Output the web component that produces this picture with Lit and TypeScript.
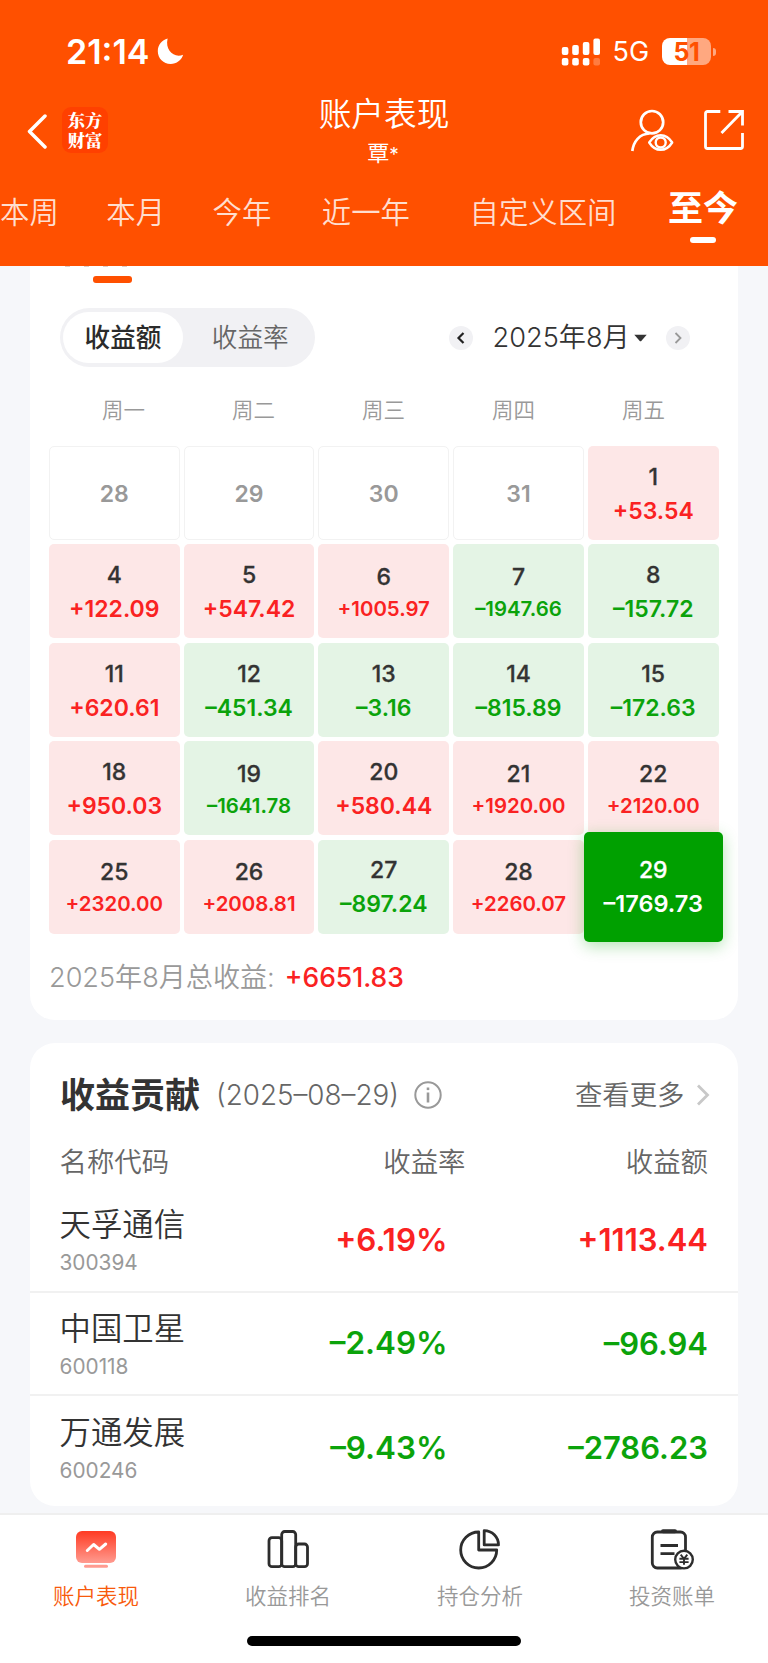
import { LitElement, html, css, svg } from "lit";
import { customElement, state } from "lit/decorators.js";
import { classMap } from "lit/directives/class-map.js";

interface Day {
  d: number;
  v?: string;
  selected?: boolean;
}

const DAYS: Day[] = [
  { d: 28 }, { d: 29 }, { d: 30 }, { d: 31 }, { d: 1, v: "+53.54" },
  { d: 4, v: "+122.09" }, { d: 5, v: "+547.42" }, { d: 6, v: "+1005.97" }, { d: 7, v: "–1947.66" }, { d: 8, v: "–157.72" },
  { d: 11, v: "+620.61" }, { d: 12, v: "–451.34" }, { d: 13, v: "–3.16" }, { d: 14, v: "–815.89" }, { d: 15, v: "–172.63" },
  { d: 18, v: "+950.03" }, { d: 19, v: "–1641.78" }, { d: 20, v: "+580.44" }, { d: 21, v: "+1920.00" }, { d: 22, v: "+2120.00" },
  { d: 25, v: "+2320.00" }, { d: 26, v: "+2008.81" }, { d: 27, v: "–897.24" }, { d: 28, v: "+2260.07" }, { d: 29, v: "–1769.73", selected: true },
];

const STOCKS = [
  { name: "天孚通信", code: "300394", rate: "+6.19%", amount: "+1113.44" },
  { name: "中国卫星", code: "600118", rate: "–2.49%", amount: "–96.94" },
  { name: "万通发展", code: "600246", rate: "–9.43%", amount: "–2786.23" },
];

const signalIcon = svg`<svg width="40" height="28" viewBox="0 0 40 28" fill="#fff">
  <rect x="0.8" y="9" width="6.6" height="8" rx="2"/><rect x="11.2" y="7" width="6.6" height="10" rx="2"/>
  <rect x="21.8" y="4" width="6.6" height="13" rx="2"/><rect x="32.4" y="0.5" width="6.6" height="16.5" rx="2"/>
  <rect x="0.8" y="20" width="6.6" height="7.5" rx="2"/><rect x="11.2" y="20" width="6.6" height="7.5" rx="2"/>
  <rect x="21.8" y="20" width="6.6" height="7.5" rx="2"/><rect x="32.4" y="20" width="6.6" height="7.5" rx="2" opacity=".25"/>
</svg>`;

const moonIcon = svg`<svg width="27" height="27" viewBox="0 0 27 27"><path d="M10.600.6C5 2 .8 7 .8 13.200.8 20.300 6.500 26 13.600 26c6 0 11-4 12.500-9.200-8.800 3.600-18.300-4-15.500-16.200Z" fill="#fff"/></svg>`;

const userIcon = svg`<svg width="44" height="44" viewBox="0 0 44 44" fill="none" stroke="#fff" stroke-width="2.700">
  <circle cx="22" cy="13.200" r="11.200"/>
  <path d="M2.300 42C3.500 32.500 9.500 24.800 19.500 24.500"/>
  <path d="M19.200 33.500c3-4.800 7-7.300 11.500-7.300s8.500 2.500 11.500 7.300c-3 4.800-7 7.300-11.500 7.300s-8.500-2.500-11.500-7.300Z" stroke-width="2.400" stroke-linejoin="round"/>
  <circle cx="30.700" cy="33.500" r="5" stroke-width="2.400"/>
</svg>`;

const shareIcon = svg`<svg width="42" height="42" viewBox="0 0 42 42" fill="none" stroke="#fff" stroke-width="2.800">
  <path d="M17.300 2.500H4.500a2 2 0 0 0-2 2v33a2 2 0 0 0 2 2h33a2 2 0 0 0 2-2V24"/>
  <path d="M25.500 2.500h14v14M18.500 24 39 3"/>
</svg>`;

const tabIcons = [
  svg`<svg width="44" height="44" viewBox="0 0 44 44"><defs><linearGradient id="g" x1="0" y1="0" x2="0" y2="1"><stop offset="0" stop-color="#ff3a22"/><stop offset="1" stop-color="#ff9b90"/></linearGradient></defs>
    <rect x="2" y="4" width="40" height="32" rx="6" fill="url(#g)"/><rect x="10" y="37.700" width="24" height="3" rx="1.500" fill="#ff9b90"/>
    <path d="m13.300 23.500 6.300-6 5.800 4.800 6.300-5.300" fill="none" stroke="#fff" stroke-width="3" stroke-linecap="round" stroke-linejoin="round"/></svg>`,
  svg`<svg width="44" height="44" viewBox="0 0 44 44" fill="none" stroke="#2d2d2d" stroke-width="2.800">
    <rect x="3" y="10.700" width="12.700" height="29" rx="3"/><rect x="15.700" y="4.500" width="14" height="35.200" rx="3"/><rect x="29.700" y="17" width="11.800" height="22.700" rx="3"/></svg>`,
  svg`<svg width="44" height="44" viewBox="0 0 44 44" fill="none" stroke="#2d2d2d" stroke-width="2.800" stroke-linejoin="round">
    <path d="M20.700 5a18 18 0 1 0 18 18h-18Z"/><path d="M26.200 3.600v14.300h14.300A14.300 14.300 0 0 0 26.200 3.600Z"/></svg>`,
  svg`<svg width="44" height="44" viewBox="0 0 44 44" fill="none" stroke="#2d2d2d" stroke-width="2.800">
    <rect x="2.300" y="5" width="33.200" height="36" rx="5"/><path d="M13 4.300h12" stroke-width="4" stroke-linecap="round"/>
    <path d="M10.500 18.500H28M10.500 26.700h14"/><circle cx="34" cy="32.600" r="8.800" fill="#fff" stroke-width="2.400"/>
    <path d="m30.700 27.600 3.300 4.200 3.300-4.200M34 31.800v6M29.400 31.800h9.200M29.400 35.100h9.200" stroke-width="1.900"/></svg>`,
];

@customElement("app-root")
export class AppRoot extends LitElement {
  @state() private mode = 0;

  static styles = css`
    :host { display: flex; flex-direction: column; width: 768px; height: 1663px; overflow: hidden; background: #f6f7fa; font-family: Inter, "Noto Sans CJK SC", sans-serif; color: #333; white-space: nowrap; }
    * { box-sizing: border-box; }
    svg { display: block; flex: none; }
    header { height: 266px; flex: none; background: #ff5000; color: #fff; overflow: hidden; }
    .status { display: flex; align-items: center; height: 103px; padding: 0 52px 0 66px; }
    .clock { width: 91px; font-size: 34px; font-weight: 600; line-height: 40px; }
    .status .signal { margin-left: auto; }
    .net { margin-left: 11.500px; width: 49.500px; font-size: 27px; line-height: 30px; }
    .battery { width: 49px; height: 27px; border-radius: 8px; background: linear-gradient(90deg, #fff 51%, #ffa880 51%); color: #ff5000; font-size: 25px; font-weight: 700; line-height: 28px; text-align: center; letter-spacing: -.5px; }
    .nub { width: 3px; height: 8px; margin-left: 2px; border-radius: 0 4px 4px 0; background: #ffa880; }
    .nav { display: grid; grid-template-columns: 1fr auto 1fr; height: 75px; }
    .left { display: flex; align-items: flex-start; padding: 4px 0 0 27px; gap: 15px; }
    .left svg { margin-top: 5.500px; }
    .logo { display: flex; flex-direction: column; align-items: center; width: 46px; height: 46px; border-radius: 9px; background: #ff4000; padding-top: 3px; font-family: "Noto Serif CJK SC", "Noto Sans CJK SC", sans-serif; font-size: 17.300px; line-height: 20px; font-weight: 900; }
    .mid { text-align: center; }
    .mid h1 { margin: -7px 0 0; font-size: 32.700px; line-height: 36px; font-weight: 350; }
    .mid p { margin: 3px 2px 0 0; font-size: 22px; line-height: 36px; }
    .mid small { font-size: 19px; }
    .right { display: flex; justify-content: flex-end; padding: 5.500px 23px 0 0; gap: 29px; }
    .ranges { display: flex; height: 88px; font-size: 29.400px; font-weight: 350; color: rgba(255,255,255,.82); line-height: 40px; padding-top: 15px; }
    .ranges span { margin-right: 47.500px; }
    .ranges .third { margin-right: 50.500px; }
    .ranges .wide { margin-right: 59.500px; }
    .ranges .last { margin-right: 51.500px; }
    .ranges .on { display: flex; flex-direction: column; align-items: center; margin: -6px 0 0; font-size: 35px; font-weight: 700; color: #fff; line-height: 42px; }
    .on i { width: 26px; height: 6px; border-radius: 3px; background: #fff; margin-top: 8px; }
    main { flex: none; height: 1247px; padding: 0 30px; overflow: hidden; }
    .card { background: #fff; }
    .cal { height: 754px; border-radius: 0 0 25px 25px; padding: 0 19.500px 0 19px; }
    .bits { display: flex; gap: 14px; height: 10px; padding-left: 16px; }
    .bits i { width: 5px; height: 1px; background: #d9cfcb; }
    .mark { width: 39px; height: 6.500px; margin-left: 44px; border-radius: 3px; background: #ff5000; }
    .tools { display: flex; align-items: center; margin-top: 25px; height: 60px; padding-left: 10.500px; }
    .pill { display: flex; width: 255.500px; height: 59px; padding: 4px 3.500px; border-radius: 30px; background: #f1f1f4; font-size: 25.600px; line-height: 52px; color: #666; text-align: center; font-weight: 350; }
    .pill span { flex: 1; border-radius: 26px; padding-left: 6px; }
    .pill .sel { flex: none; width: 120px; padding: 0; background: #fff; color: #2b2b2b; font-weight: 500; }
    .month { display: flex; align-items: center; margin-left: 134px; }
    .rd { width: 24px; height: 24px; border-radius: 50%; background: #f1f1f4; display: flex; align-items: center; justify-content: center; }
    .month b { width: 134.500px; margin-left: 19.500px; margin-right: 6.500px; font-size: 27.200px; font-weight: 350; line-height: 36px; }
    .month .tri { margin-right: 19px; }
    .week { display: grid; grid-template-columns: repeat(5, 130px); margin: 24px 0 0 9.500px; font-size: 21.500px; line-height: 36px; color: #999; text-align: center; font-weight: 350; }
    .grid { display: grid; grid-template-columns: repeat(5, 1fr); grid-auto-rows: 94px; gap: 4.400px 4.200px; margin-top: 18.500px; }
    .cell { border-radius: 5px; display: flex; flex-direction: column; align-items: center; justify-content: center; font-size: 23px; font-weight: 600; line-height: 34px; padding-top: 1.500px; }
    .cell .n { font-size: 23px; font-weight: 500; -webkit-text-stroke: .3px; }
    .none { border: 1px solid #f2f2f2; color: #999; }
    .none .n { font-weight: 600; -webkit-text-stroke: 0; }
    .up { background: #fde7e7; } .up .v { color: #fa2222; }
    .down { background: #e4f4e5; } .down .v { color: #0ba30b; }
    .small .v { font-size: 20.400px; line-height: 30px; }
    .small { padding-top: 1.500px; }
    .selected { margin: -8px -4px; background: #00a000; color: #fff; box-shadow: 0 4px 16px rgba(0,160,0,.3); z-index: 1; }
    .selected .v { color: #fff; font-size: 23.500px; }
    .total { display: flex; margin-top: 26px; font-size: 27.100px; line-height: 36px; color: #999; font-weight: 350; }
    .total b { margin-left: 10px; color: #fa2222; font-weight: 500; font-size: 26.500px; line-height: 35px; }
    .contrib { margin-top: 23px; height: 463px; border-radius: 25px; }
    .head { display: flex; align-items: center; height: 104px; padding: 0 28px 0 30px; }
    .head h2 { margin: 0; width: 156px; font-size: 35px; font-weight: 700; line-height: 44px; }
    .head .date { width: 198px; font-size: 27.800px; color: #666; font-weight: 350; }
    .head .more { margin: -5px 11.500px 0 auto; font-size: 27.400px; color: #666; font-weight: 350; }
    .cols, .row { display: grid; grid-template-columns: 1fr 200px 260.500px; padding: 0 30px 0 29.500px; }
    .cols { height: 42px; font-size: 27.400px; line-height: 31px; color: #666; text-align: right; font-weight: 350; }
    .cols span:first-child { text-align: left; }
    .cols .rate { margin-right: -18px; }
    .row { height: 103.500px; align-items: center; border-bottom: 2px solid #f1f1f1; }
    .row:last-child { border: 0; }
    .row .name { font-size: 31.400px; line-height: 40px; font-weight: 350; padding-top: 4px; height: 44px; }
    .row .code { font-size: 20.800px; line-height: 30px; color: #999; margin-top: 3px; }
    .row .num { font-size: 31px; font-weight: 600; text-align: right; }
    .row .rate { font-size: 31.400px; }
    .num.up, .num.down { background: none; }
    .num.up { color: #fa2222; } .num.down { color: #0ba30b; }
    nav { flex: 1; background: #fff; border-top: 2px solid #efefef; display: flex; flex-direction: column; align-items: center; }
    .tabs { display: grid; grid-template-columns: repeat(4, 1fr); width: 100%; padding-top: 12px; height: 121px; }
    .tab { display: flex; flex-direction: column; align-items: center; font-size: 21.500px; line-height: 30px; color: #999; gap: 10px; font-weight: 350; }
    .tab.act { color: #f85a0c; }
    .home { width: 274px; height: 10px; border-radius: 5px; background: #000; }
  `;

  private cell(c: Day) {
    const up = c.v?.startsWith("+") ?? false;
    const cls = {
      cell: true, none: !c.v, up, down: !!c.v && !up,
      small: !!c.v && c.v.length > 7 && !c.selected, selected: !!c.selected,
    };
    return html`<div class=${classMap(cls)}><span class="n">${c.d}</span>${c.v ? html`<span class="v">${c.v}</span>` : ""}</div>`;
  }

  render() {
    return html`
      <header>
        <div class="status">
          <span class="clock">21:14</span>${moonIcon}
          <span class="signal">${signalIcon}</span>
          <span class="net">5G</span>
          <span class="battery">51</span><span class="nub"></span>
        </div>
        <div class="nav">
          <div class="left">
            <svg width="20" height="36" viewBox="0 0 20 36"><path d="M18 3 2.500 18.500 18 34" fill="none" stroke="#fff" stroke-width="3.500" stroke-linejoin="round" stroke-linecap="round"/></svg>
            <div class="logo"><span>东方</span><span>财富</span></div>
          </div>
          <div class="mid"><h1>账户表现</h1><p>覃<small>*</small></p></div>
          <div class="right">${userIcon}${shareIcon}</div>
        </div>
        <div class="ranges">
          <span>本周</span><span>本月</span><span class="third">今年</span><span class="wide">近一年</span><span class="last">自定义区间</span>
          <div class="on">至今<i></i></div>
        </div>
      </header>
      <main>
        <section class="card cal">
          <div class="bits"><i></i><i></i><i></i><i></i></div>
          <div class="mark"></div>
          <div class="tools">
            <div class="pill">
              ${["收益额", "收益率"].map((t, i) => html`<span class=${classMap({ sel: this.mode === i })} @click=${() => (this.mode = i)}>${t}</span>`)}
            </div>
            <div class="month">
              <span class="rd"><svg width="10" height="12" viewBox="0 0 10 12"><path d="M7.500 1 2.500 6l5 5" fill="none" stroke="#222" stroke-width="2.200"/></svg></span>
              <b>2025年8月</b>
              <svg class="tri" width="13" height="8" viewBox="0 0 13 8"><path d="M.3.800h12.400L7.500 6.700q-1 1-2 0Z" fill="#333"/></svg>
              <span class="rd"><svg width="10" height="12" viewBox="0 0 10 12"><path d="m2.500 1 5 5-5 5" fill="none" stroke="#999" stroke-width="1.800"/></svg></span>
            </div>
          </div>
          <div class="week">${["周一", "周二", "周三", "周四", "周五"].map((w) => html`<span>${w}</span>`)}</div>
          <div class="grid">${DAYS.map((c) => this.cell(c))}</div>
          <div class="total">2025年8月总收益:<b>+6651.83</b></div>
        </section>
        <section class="card contrib">
          <div class="head">
            <h2>收益贡献</h2><span class="date">(2025–08–29)</span>
            <svg width="28" height="28" viewBox="0 0 28 28" fill="none" stroke="#999" stroke-width="2"><circle cx="14" cy="14" r="12.700"/><path d="M14 11.500v10" stroke-width="2.600"/><path d="M14 6.500v2.600" stroke-width="2.600"/></svg>
            <span class="more">查看更多</span>
            <svg width="14" height="22" viewBox="0 0 14 22"><path d="m2 1.500 9.500 9.500L2 20.500" fill="none" stroke="#c8c8c8" stroke-width="2.800"/></svg>
          </div>
          <div class="cols"><span>名称代码</span><span class="rate">收益率</span><span>收益额</span></div>
          ${STOCKS.map((s) => {
            const up = s.rate.startsWith("+");
            return html`<div class="row"><div><div class="name">${s.name}</div><div class="code">${s.code}</div></div><span class=${classMap({ num: true, rate: true, up, down: !up })}>${s.rate}</span><span class=${classMap({ num: true, up, down: !up })}>${s.amount}</span></div>`;
          })}
        </section>
      </main>
      <nav>
        <div class="tabs">${["账户表现", "收益排名", "持仓分析", "投资账单"].map((t, i) => html`<div class=${classMap({ tab: true, act: i === 0 })}>${tabIcons[i]}<span>${t}</span></div>`)}</div>
        <div class="home"></div>
      </nav>
    `;
  }
}
